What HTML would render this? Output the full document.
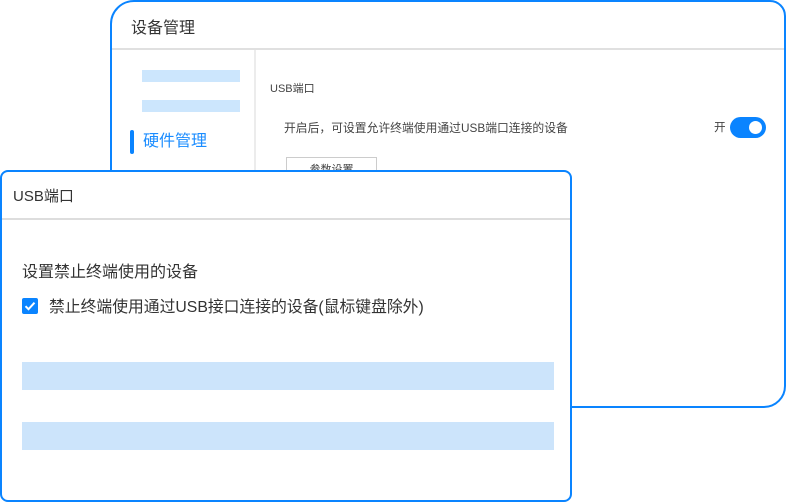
<!DOCTYPE html>
<html><head><meta charset="utf-8"><style>
*{margin:0;padding:0;box-sizing:border-box}
body{width:786px;height:502px;background:#fff;position:relative;overflow:hidden;font-family:"Liberation Sans","Noto Sans CJK SC",sans-serif;color:#333}
.back{position:absolute;left:110px;top:0;width:676px;height:408px;border:2px solid #0a84ff;border-radius:24px 16px 22px 0;background:#fff}
.back .hd{height:48px;border-bottom:2px solid #e0e0e0;padding-left:19px;font-size:16px;line-height:54px;color:#333}
.side{position:absolute;left:0;top:48px;width:144px;bottom:0;border-right:2px solid #ececec}
.bar{position:absolute;left:30px;width:98px;height:12px;background:#cce6fd}
.front{position:absolute;left:0;top:170px;width:572px;height:332px;border:2px solid #0a84ff;border-radius:8px;background:#fff}
.front .hd{height:48px;border-bottom:2px solid #ddd;padding-left:11px;font-size:15px;line-height:50px;color:#333}
.fbar{position:absolute;left:20px;width:532px;height:28px;background:#cce4fb}
</style></head><body>
<div class="back">
 <div class="hd">设备管理</div>
 <div class="side">
  <div class="bar" style="top:20px"></div>
  <div class="bar" style="top:50px"></div>
  <div style="position:absolute;left:18px;top:80px;width:4px;height:24px;background:#0a84ff;border-radius:2px"></div>
  <div style="position:absolute;left:31px;top:80px;font-size:16px;line-height:24px;color:#1a8cff">硬件管理</div>
 </div>
 <div style="position:absolute;left:158px;top:78px;font-size:11px;color:#444">USB端口</div>
 <div style="position:absolute;left:172px;top:117px;font-size:11.8px;color:#444">开启后，可设置允许终端使用通过USB端口连接的设备</div>
 <div style="position:absolute;left:602px;top:117px;font-size:11.6px;color:#444">开</div>
 <div style="position:absolute;left:618px;top:115px;width:36px;height:21px;background:#0a84ff;border-radius:11px"><div style="position:absolute;right:4px;top:4px;width:13px;height:13px;border-radius:50%;background:#fff"></div></div>
 <div style="position:absolute;left:174px;top:155px;width:91px;height:30px;border:1.5px solid #ccc;font-size:11px;text-align:center;line-height:24px;color:#444">参数设置</div>
</div>
<div class="front">
 <div class="hd">USB端口</div>
 <div style="position:absolute;left:20px;top:86px;font-size:16px;color:#333">设置禁止终端使用的设备</div>
 <div style="position:absolute;left:20px;top:126px;width:16px;height:16px;background:#0a84ff;border-radius:2px"><svg width="16" height="16" viewBox="0 0 16 16"><path d="M3.5 8.2l3 3 6-6.5" stroke="#fff" stroke-width="2" fill="none"/></svg></div>
 <div style="position:absolute;left:47px;top:122px;font-size:15.8px;color:#333">禁止终端使用通过USB接口连接的设备(鼠标键盘除外)</div>
 <div class="fbar" style="top:190px"></div>
 <div class="fbar" style="top:250px"></div>
</div>
</body></html>
